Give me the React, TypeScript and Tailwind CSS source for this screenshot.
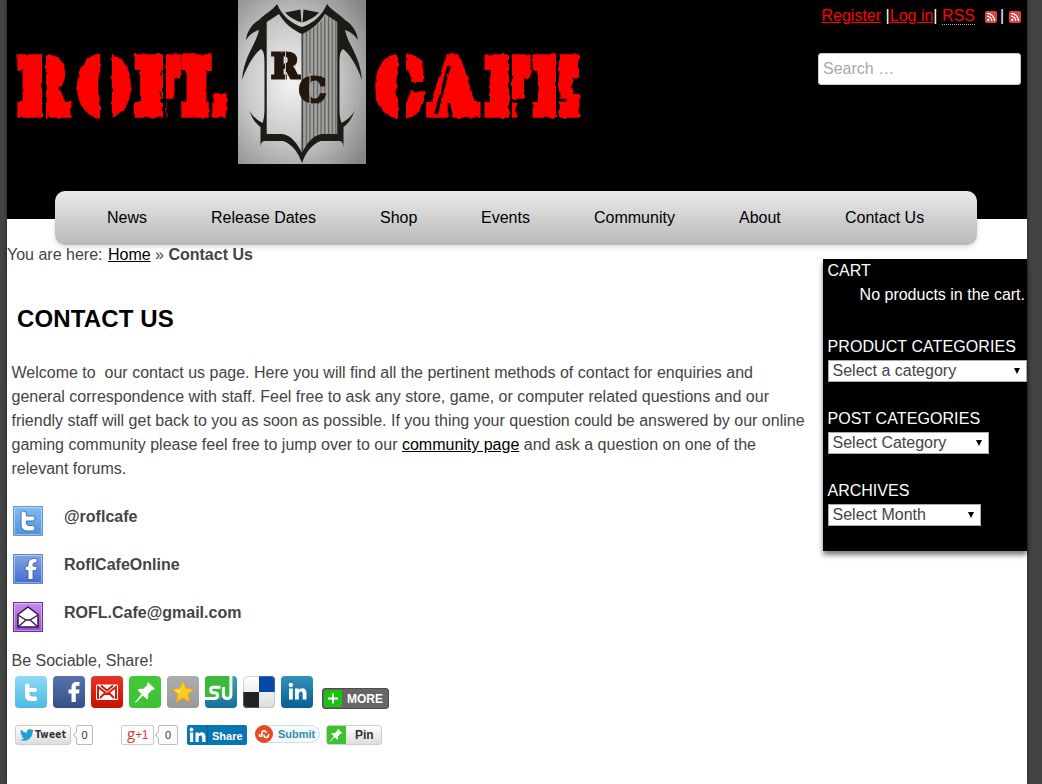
import React from "react";

const nav = [
  ["News", "ml-[52px] w-[104px]"],
  ["Release Dates", "w-[169px]"],
  ["Shop", "w-[101px]"],
  ["Events", "w-[113px]"],
  ["Community", "w-[145px]"],
  ["About", "w-[106px]"],
  ["Contact Us", ""],
];

function Word({ text, xs, id, children }: { text: string; xs: string; id: string; children: React.ReactNode }) {
  return (
    <g filter={`url(#${id})`}>
      <text
        transform="scale(.8 1)"
        x={xs}
        y="112.500"
        fontFamily="DejaVu Serif"
        fontWeight="700"
        fontSize="71"
        fill="#f00"
        stroke="#f00"
        strokeWidth="11.500"
      >
        {text}
      </text>
      <g stroke="#000" fill="none">{children}</g>
    </g>
  );
}

function Banner() {
  const half = (
    <g fill="#1d1b15">
      <path d="M47 4C42 11 33 15 29 20C21 25 17 32 16 40C20 34 25 31 29 30C26 45 14 55 12 80C17 66 24 54 31 49C34 51 34.500 56 34.500 64V108C34.500 114 34 119 32.500 123C27 120 22 116 19 110C22 118 25 123 30.500 127V147C31 143 32 141 35 141H53C62 144 68 152 72 163V153C67 143 61 135 52 134H36.700V22L49 14C55 24 63 30 72 34V27C62 24 52 16 47 4Z" />
      <path d="M55 12.500L70.500 9.500L71.500 22.500Q61 19 55 12.500Z" />
    </g>
  );
  return (
    <svg className="block h-[180px] w-[600px] shrink-0" viewBox="7 0 600 180">
      <defs>
        <radialGradient id="plate" cx=".42" cy=".5" r=".72">
          <stop offset="0" stopColor="#f3f3f3" />
          <stop offset=".5" stopColor="#c9c9c9" />
          <stop offset="1" stopColor="#858585" />
        </radialGradient>
        <pattern id="pin" width="3.700" height="8" patternUnits="userSpaceOnUse" x="302">
          <rect width="3.700" height="8" fill="#a2a2a0" />
          <rect width="1.200" height="8" fill="#5c5b56" />
        </pattern>
        <filter id="rough" x="-5%" y="-10%" width="110%" height="120%">
          <feTurbulence type="fractalNoise" baseFrequency=".16" numOctaves="1" seed="4" />
          <feDisplacementMap in="SourceGraphic" scale="4" xChannelSelector="R" yChannelSelector="G" />
        </filter>
        <filter id="rough2" x="-10%" y="-10%" width="120%" height="120%">
          <feTurbulence type="fractalNoise" baseFrequency=".35" numOctaves="2" seed="8" />
          <feDisplacementMap in="SourceGraphic" scale="2" xChannelSelector="R" yChannelSelector="G" />
        </filter>
      </defs>
      <Word text="ROFL" xs="24 99 171 229" id="rough">
        <path d="M44 50V122" strokeWidth="4" />
        <path d="M106 50V122" strokeWidth="12" />
        <path d="M164.500 50V122" strokeWidth="3" />
        <path d="M210.500 92V122" strokeWidth="3.500" />
      </Word>
      <rect x="238" width="128" height="164" fill="url(#plate)" />
      <path d="M302 33 Q321 26 327 12 L338 22V135H322Q311 139 302 154Z" fill="url(#pin)" />
      <path d="M302 33V155" stroke="#34332e" />
      <g transform="translate(230 0)">{half}</g>
      <g transform="matrix(-1 0 0 1 374 0)">{half}</g>
      <g filter="url(#rough2)" fill="#211510" stroke="#211510" strokeWidth="3" fontFamily="DejaVu Serif" fontWeight="700" fontSize="34">
        <text x="271" y="78">R</text>
        <text x="299" y="102">C</text>
      </g>
      <path d="M285.500 50V80M310 73V104" stroke="#bdbdbd" strokeWidth="1" />
      <Word text="CAFE" xs="472 539 608 668" id="rough">
        <path d="M402 50V122" strokeWidth="8" />
        <path d="M449 66L436 114" strokeWidth="3.500" />
        <path d="M510.500 50V122" strokeWidth="3" />
        <path d="M557.500 50V122" strokeWidth="3" />
      </Word>
    </svg>
  );
}

function Rss() {
  return (
    <svg className="block h-3 w-3" viewBox="0 0 12 12">
      <rect width="12" height="12" rx="2" fill="#d8434b" />
      <circle cx="3.2" cy="8.9" r="1.2" fill="#fff" />
      <path d="M2 5.2a4.8 4.8 0 0 1 4.8 4.8M2 2.4A7.6 7.6 0 0 1 9.6 10" stroke="#fff" strokeWidth="1.3" fill="none" />
    </svg>
  );
}

function Select({ label, cls }: { label: string; cls: string }) {
  return (
    <div className={`flex h-[22px] items-center justify-between border border-[#a9a9a9] bg-white pl-1 text-[#444] ${cls}`}>
      <span>{label}</span>
      <svg className="h-[6px] w-[6px]" viewBox="0 0 6 6"><path d="M0 0h6L3 6z" fill="#000" /></svg>
    </div>
  );
}

const fb = "M18.500 26V17.500H15.500V13.500H18.500V11.500C18.500 7.500 20.500 6 23.500 6H26.500V9.800H24.800C23.300 9.800 22.800 10.400 22.800 11.800V13.500H26.500L26 17.500H22.800V26Z";
const pinPath = "M19 6l7 7-2 1-1-.3-4 4.500c.7 2 .2 4-.9 5.300L14 19.500 7 26.500 6 27l.5-1.500L12.500 18 8.500 14c1.500-1.200 3.500-1.500 5.300-.8l4.600-4.200-.4-1z";

function Soc({ id, a, b, children }: { id: string; a: string; b: string; children: React.ReactNode }) {
  return (
    <svg className="block h-8 w-8" viewBox="0 0 32 32">
      <defs>
        <linearGradient id={id} x2="0" y2="1"><stop stopColor={a} /><stop offset="1" stopColor={b} /></linearGradient>
        <clipPath id={id + "c"}><rect width="32" height="32" rx="4" /></clipPath>
      </defs>
      <g clipPath={`url(#${id}c)`}><rect width="32" height="32" fill={`url(#${id})`} />{children}</g>
    </svg>
  );
}

function Tile({ id, a, b, edge, children }: { id: string; a: string; b: string; edge: string; children: React.ReactNode }) {
  return (
    <svg className="block h-[30px] w-[30px]" viewBox="0 0 30 30">
      <defs><linearGradient id={id} x2="0" y2="1"><stop stopColor={a} /><stop offset="1" stopColor={b} /></linearGradient></defs>
      <rect x=".5" y=".5" width="29" height="29" fill={`url(#${id})`} stroke={edge} />
      <rect x="1.500" y="1.500" width="27" height="27" fill="none" stroke="#fff" strokeOpacity=".4" />
      {children}
    </svg>
  );
}

function Count({ cls }: { cls: string }) {
  return (
    <div className="flex">
      <svg className="z-10 -mr-px mt-[6px] h-2 w-[4px]" viewBox="0 0 4 8"><path d="M4 0L.6 4 4 8" fill="#fff" stroke="#aaa" /></svg>
      <span className={`flex h-5 shrink-0 items-center justify-center rounded-[2px] border border-[#bbb] bg-white text-[11px] text-[#333] ${cls}`}>0</span>
    </div>
  );
}

const contacts = [
  {
    label: "@roflcafe",
    icon: (
      <Tile id="t1" a="#84bdf0" b="#4f8fe0" edge="#6795c9">
        <path d="M10.500 5Q13.500 5 13.500 8V10H19.500Q22 10 22 12.500T19.500 15H13.500V17Q13.500 19.500 16 19.500H19.500Q22 19.500 22 22.200T19.500 25H14.500Q8 25 8 18.500V7.500Q8 5 10.500 5Z" fill="#fff" stroke="#3b73b5" strokeWidth="1" />
      </Tile>
    ),
  },
  {
    label: "RoflCafeOnline",
    icon: (
      <Tile id="t2" a="#7fa8e4" b="#4669d2" edge="#6286c4">
        <path d="M15 25.500v-9h-2.800v-4.300H15V10.500q0-6 5.800-6H24v4.300h-2q-2 0-2 1.700v1.700h4l-.5 4.300H20v9z" fill="#fff" stroke="#3457a8" strokeWidth=".8" />
      </Tile>
    ),
  },
  {
    label: "ROFL.Cafe@gmail.com",
    icon: (
      <Tile id="t3" a="#c98ced" b="#9250c7" edge="#6b2c9c">
        <path d="M5 12.500L15 5l10 7.500V25H5z" fill="#fff" stroke="#35164e" strokeWidth="1.500" />
        <path d="M5 13l8 5h4l8-5M5 25l8-7M25 25l-8-7" fill="none" stroke="#35164e" strokeWidth="1.300" />
      </Tile>
    ),
  },
];

const lines = [
  "Welcome to \u00a0our contact us page. Here you will find all the pertinent methods of contact for enquiries and",
  "general correspondence with staff. Feel free to ask any store, game, or computer related questions and our",
  "friendly staff will get back to you as soon as possible. If you thing your question could be answered by our online",
];

export default function App() {
  return (
    <div className="h-[784px] w-[1042px] overflow-hidden bg-[#444] font-['Liberation_Sans',Arial,sans-serif] text-[16px] leading-6 text-[#444]">
      <div className="ml-[7px] h-[784px] w-[1020px] bg-white shadow-[0_0_4px_#222]">
        <header className="flex h-[219px] flex-col bg-black">
          <div className="flex h-[191px] shrink-0 justify-between">
            <Banner />
            <div className="w-[213px]">
              <div className="flex h-8 items-center pl-[7.500px] text-[#f00]">
                <span className="underline">Register</span>
                <span className="ml-[4.500px] text-white">|</span>
                <span className="underline">Log in</span>
                <span className="text-white">|</span>
                <span className="ml-[4.500px] border-b border-dotted border-[#aaa] leading-[17px]">RSS</span>
                <span className="ml-[10px] mt-[2px]"><Rss /></span>
                <span className="ml-[3px] mr-[5px] text-white">|</span>
                <span className="mt-[2px]"><Rss /></span>
              </div>
              <div className="ml-1 mt-[21px] flex h-8 w-[203px] items-center rounded-[3px] border border-[#ccc] bg-white pl-1 text-[#a9a9a9]">Search …</div>
            </div>
          </div>
          <nav className="relative z-10 ml-12 flex h-[54px] w-[922px] shrink-0 items-center rounded-[10px] bg-gradient-to-b from-[#eaeaea] to-[#b9b9b9] text-black shadow-[0_2px_5px_rgba(0,0,0,0.15)]">
            {nav.map(([t, c]) => <span key={t} className={`whitespace-nowrap ${c}`}>{t}</span>)}
          </nav>
        </header>
        <div className="flex">
          <main className="w-[816px] shrink-0 pt-6">
            <div><span className="mr-px">You are here: </span><span className="text-black underline">Home</span> » <b>Contact Us</b></div>
            <h1 className="ml-[10px] mt-9 text-[24px] font-bold leading-[32px] tracking-[.14px] text-black">CONTACT US</h1>
            <div className="ml-[4.500px] mt-[26px] whitespace-nowrap">
              {lines.map((l) => <p key={l}>{l}</p>)}
              <p>gaming community please feel free to jump over to our <span className="text-black underline">community page</span> and ask a question on one of the</p>
              <p>relevant forums.</p>
            </div>
            <div className="ml-[6px] mt-[25px] flex flex-col gap-[18px]">
              {contacts.map((c) => (
                <div key={c.label} className="flex h-[30px] items-start gap-[21px]">
                  {c.icon}<b className="-mt-px">{c.label}</b>
                </div>
              ))}
            </div>
            <p className="ml-[4.500px] mt-[17px]">Be Sociable, Share!</p>
            <div className="ml-2 mt-[3px] flex gap-[6px]">
              <Soc id="s1" a="#8edcf5" b="#4bb9e6"><path d="M12 7.500Q14.500 7.500 14.500 10V12H20Q22 12 22 14T20 16H14.500V18Q14.500 20.500 17 20.500H20Q22.200 20.500 22.200 22.700T20 25H16Q10 25 10 19V9.500Q10 7.500 12 7.500Z" fill="#fff" /></Soc>
              <Soc id="s2" a="#5872a9" b="#34508c"><path d={fb} fill="#fff" /></Soc>
              <Soc id="s3" a="#e73525" b="#c61000">
                <rect x="5" y="8.500" width="22" height="15.500" rx="1" fill="#fff" />
                <path d="M7 23V11l9 7 9-7v12M10 9.500l6 5 6-5M9 22l5-5M23 22l-5-5" fill="none" stroke="#d51b0d" strokeWidth="2" />
              </Soc>
              <Soc id="s4" a="#42c93a" b="#3dc133"><path d={pinPath} fill="#fff" /></Soc>
              <Soc id="s5" a="#adadad" b="#999">
                <path d="M16 5.500l3.200 7 7.300.8-5.500 5 1.600 7.500-6.600-3.900-6.600 3.900 1.600-7.500-5.500-5 7.300-.8z" fill="#ffcb20" stroke="#f4a51a" strokeLinejoin="round" />
                <path d="M16 7l-2.500 6.500-6 .5 5 4z" fill="#ffe65d" />
              </Soc>
              <Soc id="s6" a="#36a7a5" b="#176f9c">
                <path d="M0 0H26V18q0 4-4 4-3 0-4-3-1 4-5 4H0z" fill="#3cb83c" />
                <path d="M0 22.500h9.500q3 0 3-2.900T9.500 16.700H8.500q-2.800 0-2.800-2.700t2.800-2.700H15.500M18.500 11v7.800q0 3.700 3.700 3.700t3.700-3.700V0" fill="none" stroke="#fff" strokeWidth="3" />
              </Soc>
              <Soc id="s7" a="#fff" b="#ddd">
                <rect x="16" width="16" height="16" fill="#0648a6" /><rect y="16" width="16" height="16" fill="#222" />
                <rect x=".5" y=".5" width="31" height="31" rx="4" fill="none" stroke="#999" strokeOpacity=".4" />
              </Soc>
              <Soc id="s8" a="#3292bb" b="#075f90">
                <circle cx="9.800" cy="9" r="2.200" fill="#fff" />
                <path d="M8 12.500h3.800V23.500H8zM14 12.500h3.700V14q1.200-1.800 3.500-1.800 4.300 0 4.300 4.800v6.500h-3.800v-5.800q0-2.200-1.700-2.200-2.200 0-2.200 2.400V23.500H14z" fill="#fff" />
              </Soc>
              <div className="ml-[3px] mt-3 flex h-[21px] w-[67px] items-center rounded-[3px] border border-[#4d4d4d] bg-[#666] text-[12px] font-bold text-white">
                <svg className="ml-px mr-[5px] h-[17px] w-[18px]" viewBox="0 0 18 17"><rect width="18" height="17" rx="2" fill="#18c40e" /><path d="M9 3.500v10M4 8.500h10" stroke="#fff" strokeWidth="2" /></svg>MORE
              </div>
            </div>
            <div className="ml-2 mt-4 flex h-5 items-center">
              <div className="flex h-5 w-14 items-center rounded-[3px] border border-[#ccc] bg-gradient-to-b from-white to-[#ddd] text-[11px] font-bold text-[#333]">
                <svg className="ml-1 mr-px h-3 w-[14px]" viewBox="0 0 24 20"><path d="M24 2.400a10 10 0 0 1-2.800.8A5 5 0 0 0 23.300.4a10 10 0 0 1-3.100 1.200 4.900 4.900 0 0 0-8.400 4.500A14 14 0 0 1 1.700 1a4.900 4.900 0 0 0 1.500 6.600 5 5 0 0 1-2.200-.6 4.900 4.900 0 0 0 3.900 4.900 5 5 0 0 1-2.200.1 4.900 4.900 0 0 0 4.600 3.400A10 10 0 0 1 0 17.500 14 14 0 0 0 21.500 5z" fill="#20a0d8" /></svg>
                <span className="font-['DejaVu_Sans_Condensed','DejaVu_Sans',sans-serif] text-[10px] tracking-[.3px]">Tweet</span>
              </div>
              <div className="ml-[2px] w-[22px]"><Count cls="w-[17px]" /></div>
              <div className="ml-[26px] flex h-5 w-[33px] items-center justify-center rounded-[2px] border border-[#ccc] text-[#d6402f]">
                <span className="-mt-1 font-['Open_Sans','Noto_Sans',sans-serif] text-[15px]">g</span><span className="text-[12px] tracking-[-.5px]">+1</span>
              </div>
              <div className="ml-px w-6"><Count cls="w-5" /></div>
              <div className="ml-[8px] flex h-5 w-[60px] items-center rounded-[2px] bg-[#0976b4] text-[11px] font-bold text-white">
                <svg className="mr-[4px] h-5 w-[21px]" viewBox="0 0 21 20"><circle cx="4.500" cy="4.500" r="1.900" fill="#fff" /><path d="M3 7.500h3.200V17H3zM8.500 7.500h3.200v1.300C13.500 6 18.500 6.800 18.500 11.500V17h-3.300v-4.700c0-2.400-3.500-2.400-3.500 0V17H8.500z" fill="#fff" /><path d="M20.500 0v20" stroke="#066095" /></svg>
                <span className="pt-px">Share</span>
              </div>
              <div className="-mt-[2px] ml-[8px] flex h-[18px] w-[65px] items-center rounded-full border border-[#c9e3ee] bg-[#f2fafd] text-[11px] font-bold text-[#3b86b0]">
                <svg className="-ml-px mr-[5px] h-[18px] w-[18px] shrink-0" viewBox="0 0 18 18"><circle cx="9" cy="9" r="9" fill="#e84a24" /><path d="M4.500 9v1.300a1.200 1.200 0 0 0 2.400 0V8a2.100 2.100 0 0 1 4.200 0M9 9.500v.8a2.200 2.200 0 0 0 4.500 0V9" fill="none" stroke="#fff" strokeWidth="1.600" /></svg>Submit
              </div>
              <div className="ml-[6px] flex h-5 w-14 items-center overflow-hidden rounded-[3px] border border-[#ccc] bg-gradient-to-b from-white to-[#ddd] text-[12px] font-bold text-[#333]">
                <svg className="-ml-px mr-[9px] h-5 w-5" viewBox="0 0 32 32"><rect width="32" height="32" fill="#3dc12d" /><path d={pinPath} fill="#fff" /></svg>Pin
              </div>
            </div>
          </main>
          <aside className="mt-10 h-[292px] w-[204px] shrink-0 bg-black pl-[4.500px] text-white shadow-[0_4px_5px_rgba(0,0,0,0.5)]">
            <h2>CART</h2>
            <p className="pr-[2px] text-right">No products in the cart.</p>
            <h2 className="mt-7 tracking-[.08px]">PRODUCT CATEGORIES</h2>
            <Select label="Select a category" cls="mt-px w-[199px] pr-[6px]" />
            <h2 className="mt-[25px] tracking-[.08px]">POST CATEGORIES</h2>
            <Select label="Select Category" cls="mt-px w-[161px] pr-[6px]" />
            <h2 className="mt-[25px]">ARCHIVES</h2>
            <Select label="Select Month" cls="mt-px w-[153px] pr-[6px]" />
          </aside>
        </div>
      </div>
    </div>
  );
}
